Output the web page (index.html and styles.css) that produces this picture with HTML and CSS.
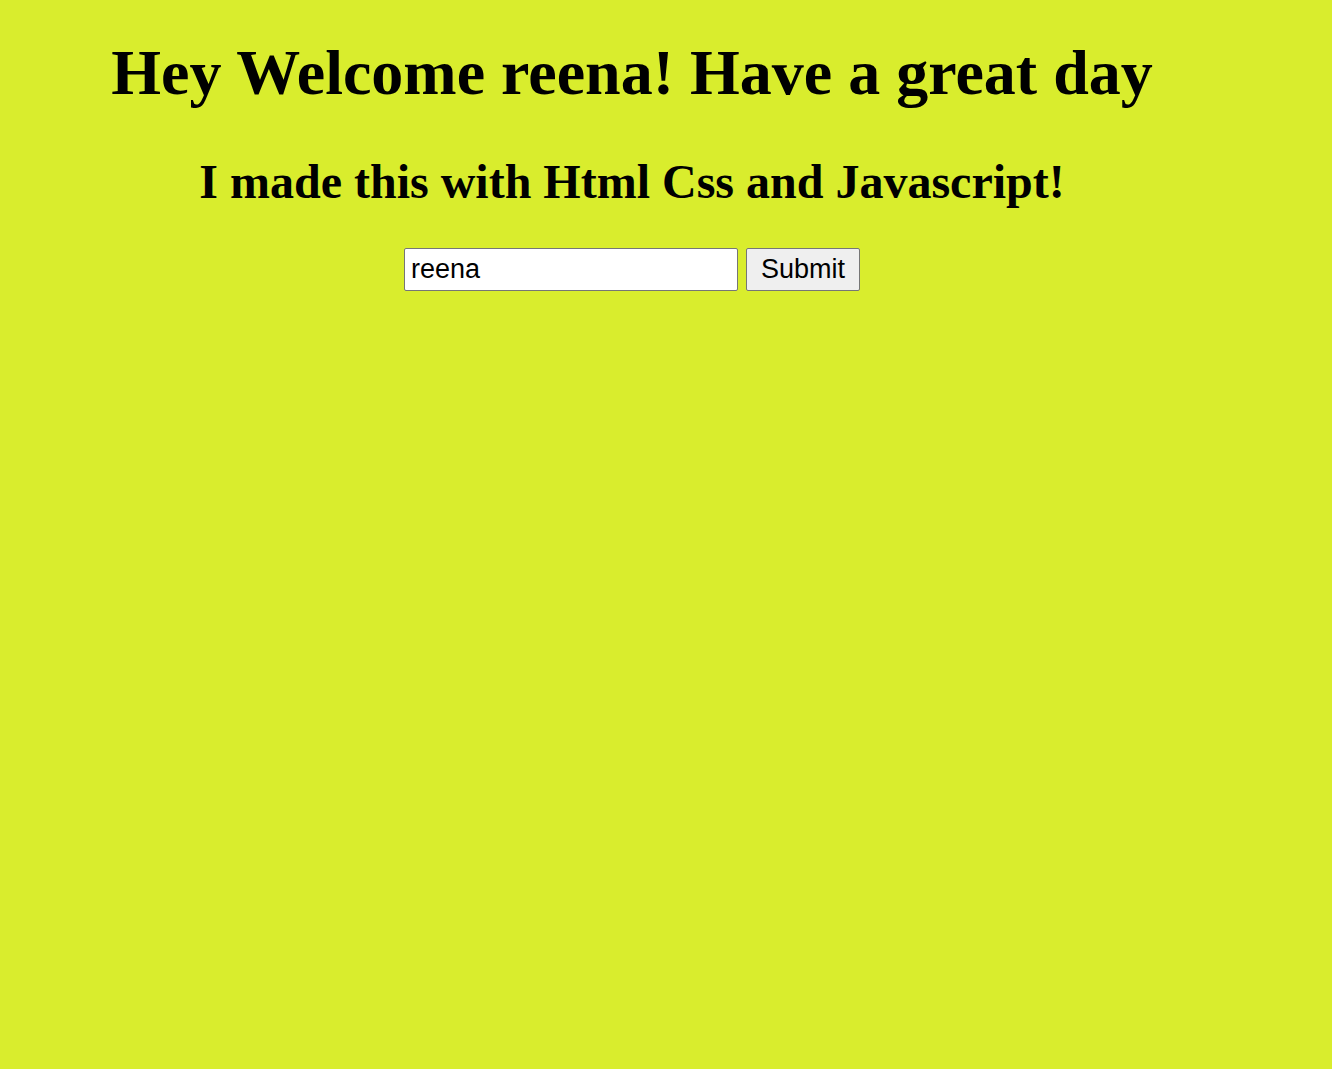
FILE: index.html
```html
<!DOCTYPE html>
<html lang="en">
<head>
  <meta charset="utf-8">
  <meta name="viewport" content="width=device-width, initial-scale=1">
  <title>Welcome</title>
  <link rel="stylesheet" href="styles.css">
</head>
<body>
  <main class="page">
    <h1 class="title">Hey Welcome reena! Have a great day</h1>
    <h2 class="subtitle">I made this with Html Css and Javascript!</h2>
    <form class="name-form">
      <input class="name-input" type="text" value="reena" aria-label="Your name">
      <button class="submit" type="button">Submit</button>
    </form>
  </main>
</body>
</html>
```
FILE: styles.css
```css
* {
  box-sizing: border-box;
}

body {
  margin: 0;
  background: #d9ed2d;
  color: #000;
  font-family: "Liberation Serif", "Times New Roman", serif;
}

.page {
  padding: 36px 84px 0 16px;
  text-align: center;
}

.title {
  margin: 0;
  font-size: 64px;
  line-height: 74px;
}

.subtitle {
  margin: 44px 0 38px;
  font-size: 48px;
  line-height: 56px;
}

.name-form {
  display: flex;
  justify-content: center;
  gap: 8px;
}

.name-input,
.submit {
  height: 43px;
  border: 1px solid #767676;
  border-radius: 2px;
  color: #000;
  font-family: "Liberation Sans", Arial, sans-serif;
  font-size: 27px;
}

.name-input {
  width: 334px;
  padding: 0 6px;
  background: #fff;
}

.submit {
  width: 114px;
  padding: 0;
  background: #efefef;
}
```
